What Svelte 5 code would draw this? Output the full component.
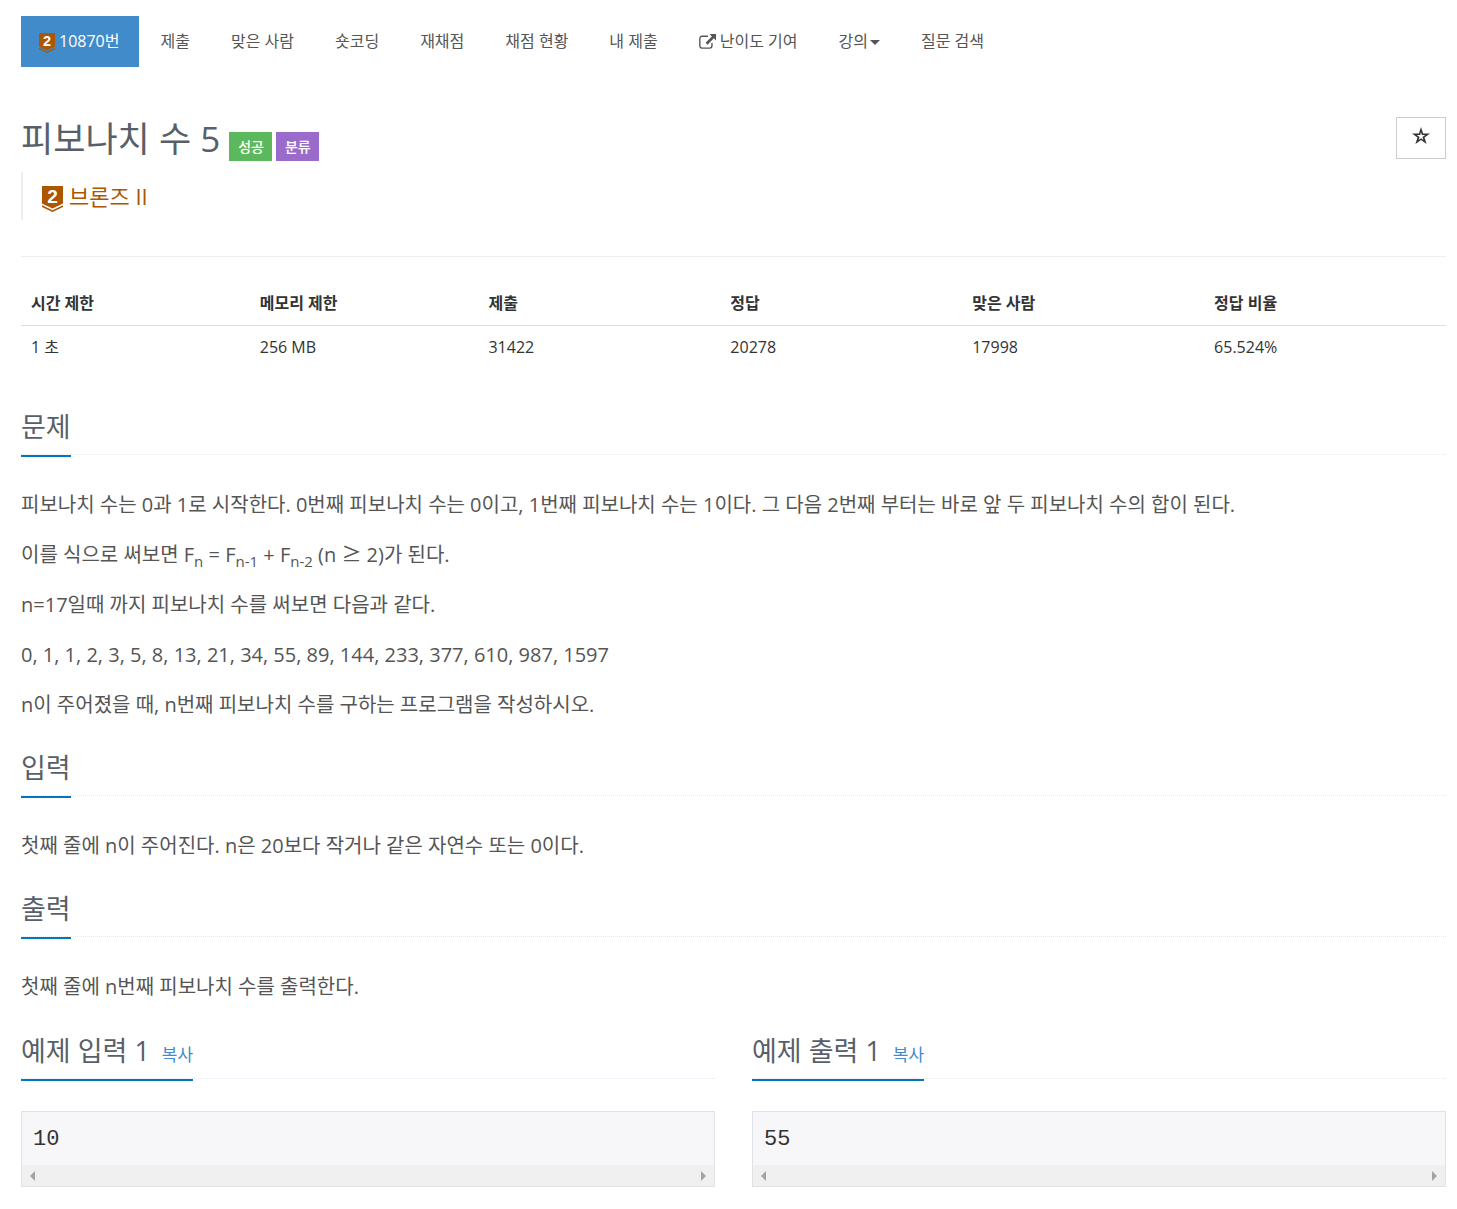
<script>
  const menu = [
    { label: "제출" },
    { label: "맞은 사람" },
    { label: "숏코딩" },
    { label: "재채점" },
    { label: "채점 현황" },
    { label: "내 제출" },
    { label: "난이도 기여", external: true },
    { label: "강의", caret: true },
    { label: "질문 검색" },
  ];

  const info = [
    { head: "시간 제한", value: "1 초" },
    { head: "메모리 제한", value: "256 MB" },
    { head: "제출", value: "31422" },
    { head: "정답", value: "20278" },
    { head: "맞은 사람", value: "17998" },
    { head: "정답 비율", value: "65.524%" },
  ];

  const samples = [
    { title: "예제 입력 1", data: "10" },
    { title: "예제 출력 1", data: "55" },
  ];

  function copy(text) {
    navigator.clipboard?.writeText(text);
  }
</script>

{#snippet tier()}
  <svg class="tier" viewBox="0 0 21 26" aria-hidden="true">
    <path d="M0 0H21V17.500L10.500 22.500L0 17.500Z" fill="#ad5600" />
    <path d="M0 19.200L10.500 24.200L21 19.200V21L10.500 26L0 21Z" fill="#ad5600" />
    <text x="10.5" y="17" text-anchor="middle">2</text>
  </svg>
{/snippet}

<div class="container">
  <nav>
    <ul class="menu">
      <li><a class="active" href="#problem">{@render tier()} 10870번</a></li>
      {#each menu as item}
        <li>
          <a href="#menu">
            {#if item.external}
              <svg class="external" viewBox="0 0 16 14" aria-hidden="true">
                <path
                  d="M8.500 2H3A2.200 2.200 0 0 0 0.800 4.200V11A2.200 2.200 0 0 0 3 13.200H10A2.200 2.200 0 0 0 12.200 11V8.500"
                  fill="none"
                  stroke="currentColor"
                  stroke-width="1.300"
                />
                <path d="M10 0H16V6L14 4L8 10L6.200 8.200L12.100 2.200Z" fill="currentColor" />
              </svg>
            {/if}
            {item.label}{#if item.caret}<span class="caret"></span>{/if}
          </a>
        </li>
      {/each}
    </ul>
  </nav>

  <header>
    <div class="title">
      <h1>피보나치 수 5</h1>
      <span class="label success">성공</span>
      <span class="label category">분류</span>
    </div>
    <button class="favorite" aria-label="즐겨찾기">
      <svg viewBox="0 0 18 18" aria-hidden="true">
        <path
          d="M9 0L11.100 6.400H18L12.500 10.500L14.600 17L9 13L3.400 17L5.500 10.500L0 6.400H6.900ZM9 5L8.200 8.100H4.800L7.500 10.100L6.600 13L9 11.200L11.400 13L10.500 10.100L13.200 8.100H9.800Z"
          fill="currentColor"
          fill-rule="evenodd"
        />
      </svg>
    </button>
  </header>
  <blockquote>{@render tier()} 브론즈 II</blockquote>

  <hr />

  <table>
    <thead>
      <tr>
        {#each info as { head }}<th>{head}</th>{/each}
      </tr>
    </thead>
    <tbody>
      <tr>
        {#each info as { value }}<td>{value}</td>{/each}
      </tr>
    </tbody>
  </table>

  <section>
    <div class="headline"><h2>문제</h2></div>
    <p>
      피보나치 수는 0과 1로 시작한다. 0번째 피보나치 수는 0이고, 1번째 피보나치 수는 1이다. 그 다음 2번째 부터는 바로 앞 두 피보나치 수의 합이 된다.
    </p>
    <p>
      이를 식으로 써보면 F<sub>n</sub> = F<sub>n-1</sub> + F<sub>n-2</sub> (n <span class="operator">≥</span> 2)가 된다.
    </p>
    <p>n=17일때 까지 피보나치 수를 써보면 다음과 같다.</p>
    <p>0, 1, 1, 2, 3, 5, 8, 13, 21, 34, 55, 89, 144, 233, 377, 610, 987, 1597</p>
    <p>n이 주어졌을 때, n번째 피보나치 수를 구하는 프로그램을 작성하시오.</p>
  </section>

  <section>
    <div class="headline"><h2>입력</h2></div>
    <p>첫째 줄에 n이 주어진다. n은 20보다 작거나 같은 자연수 또는 0이다.</p>
  </section>

  <section>
    <div class="headline"><h2>출력</h2></div>
    <p>첫째 줄에 n번째 피보나치 수를 출력한다.</p>
  </section>

  <div class="samples">
    {#each samples as { title, data }}
      <section>
        <div class="headline">
          <h2>{title} <button class="copy" onclick={() => copy(data)}>복사</button></h2>
        </div>
        <div class="sample">
          <pre>{data}</pre>
          <div class="scrollbar">
            <svg viewBox="0 0 5 10" aria-hidden="true"><path d="M5 0V10L0 5Z" /></svg>
            <svg viewBox="0 0 5 10" aria-hidden="true"><path d="M0 0V10L5 5Z" /></svg>
          </div>
        </div>
      </section>
    {/each}
  </div>
</div>

<style>
  :global(body) {
    background: #fff;
  }
  .container {
    padding: 16px 11px 22px 21px;
    color: #333;
    font-family: "Open Sans", "Noto Sans CJK KR", sans-serif;
    font-size: 16px;
    font-weight: 400;
    line-height: 24px;
  }
  button {
    font-family: inherit;
    font-weight: inherit;
    cursor: pointer;
  }
  .menu {
    display: flex;
    flex-wrap: wrap;
    gap: 5px;
    margin: 0;
    padding: 0;
    list-style: none;
  }
  .menu a {
    display: flex;
    align-items: center;
    gap: 4px;
    padding: 13px 18px 14px;
    color: #555;
    text-decoration: none;
  }
  .menu a.active {
    margin-right: -2px;
    padding-right: 20px;
    background: #428bca;
    color: #fff;
  }
  .tier {
    width: 16px;
    height: 20px;
    margin-top: 4px;
    overflow: visible;
  }
  .tier text {
    fill: #fff;
    font-family: "Liberation Sans", sans-serif;
    font-size: 19px;
    font-weight: 700;
  }
  .external {
    width: 17px;
    height: 15px;
  }
  .caret {
    border: 5px solid transparent;
    border-top-color: currentColor;
    border-bottom: 0;
    margin: 3px 0 0 -2px;
  }
  header {
    display: flex;
    justify-content: space-between;
    align-items: flex-start;
    margin-top: 50px;
  }
  .title {
    display: flex;
    align-items: flex-end;
    gap: 4px;
  }
  h1 {
    margin: 0 5px 0 0;
    color: #585f69;
    font-size: 35px;
    font-weight: 400;
    line-height: 44px;
  }
  .label {
    padding: 0 8px 0 9px;
    color: #fff;
    font-size: 14px;
    font-weight: 500;
    line-height: 29px;
  }
  .success {
    background: #5cb85c;
  }
  .category {
    background: #9b6bcc;
  }
  .favorite {
    display: flex;
    justify-content: center;
    width: 50px;
    height: 42px;
    padding: 9px 0;
    border: 1px solid #ccc;
    background: #fff;
    color: #333;
  }
  .favorite svg {
    width: 18px;
    height: 18px;
  }
  blockquote {
    display: flex;
    align-items: center;
    gap: 6px;
    margin: 11px 0 36px;
    padding: 0 19px;
    border-left: 2px solid #eee;
    color: #ad5600;
    font-size: 22px;
    line-height: 48px;
  }
  blockquote .tier {
    width: 21px;
    height: 26px;
    margin-top: 6px;
  }
  hr {
    margin: 0;
    border: 0;
    border-top: 1px solid #eee;
  }
  table {
    width: 100%;
    margin: 24px 0 39px;
    border-collapse: collapse;
    table-layout: fixed;
  }
  th,
  td {
    width: 17%;
    padding: 10px;
    text-align: left;
  }
  td {
    padding-top: 9px;
  }
  th {
    border-bottom: 1px solid #ddd;
    font-weight: 700;
  }
  th:nth-child(-n + 2) {
    width: 16%;
  }
  .headline {
    display: flex;
    margin: 29px 0 35px;
    border-bottom: 1px dotted #e4e9f0;
  }
  h2 {
    margin: 0 0 -3px;
    padding-bottom: 9px;
    border-bottom: 2px solid #0076bd;
    color: #585f69;
    font-size: 27px;
    font-weight: 400;
    line-height: 38px;
  }
  p {
    margin: 0 0 20px;
    color: #555;
    font-size: 20px;
    line-height: 30px;
  }
  sub {
    font-size: 15px;
    line-height: 0;
  }
  .operator {
    font-family: "Noto Sans CJK KR", sans-serif;
    line-height: 0;
  }
  .samples {
    display: grid;
    grid-template-columns: 1fr 1fr;
    gap: 37px;
  }
  .samples .headline {
    margin: 10px 0 32px;
  }
  .copy {
    margin-left: 5px;
    padding: 0;
    border: 0;
    background: none;
    color: #428bca;
    font-size: 17px;
  }
  .sample {
    border: 1px solid #e1e1e8;
    background: #f7f7f9;
  }
  pre {
    margin: 0;
    padding: 13px 11px 11px;
    font-family: "Liberation Mono", monospace;
    font-size: 22px;
    line-height: 29px;
  }
  .scrollbar {
    display: flex;
    justify-content: space-between;
    align-items: center;
    height: 21px;
    padding: 0 8px;
    background: #f0f0f0;
  }
  .scrollbar svg {
    width: 5px;
    height: 10px;
    fill: #a3a3a3;
  }
</style>
